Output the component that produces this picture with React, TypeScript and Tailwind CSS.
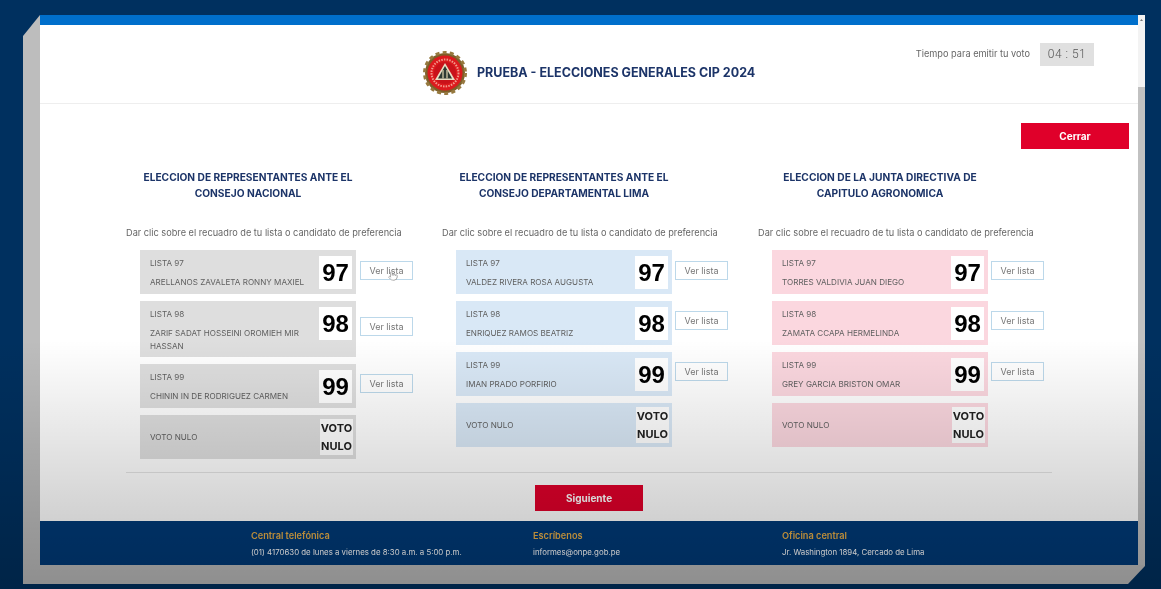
import { Pointer } from 'lucide-react';

const lists = [
  {
    title: 'ELECCION DE REPRESENTANTES ANTE EL',
    sub: 'CONSEJO NACIONAL',
    card: 'bg-[#dedede]',
    gap: 'ml-[4px]',
    rows: [
      { n: '97', name: 'ARELLANOS ZAVALETA RONNY MAXIEL', top: 'mt-[11px]', hover: true },
      { n: '98', name: 'ZARIF SADAT HOSSEINI OROMIEH MIR HASSAN', top: 'mt-[16px]' },
      { n: '99', name: 'CHININ IN DE RODRIGUEZ CARMEN', top: 'mt-[10px]' },
    ],
  },
  {
    title: 'ELECCION DE REPRESENTANTES ANTE EL',
    sub: 'CONSEJO DEPARTAMENTAL LIMA',
    card: 'bg-[#d9e8f6]',
    gap: 'ml-[3px]',
    rows: [
      { n: '97', name: 'VALDEZ RIVERA ROSA AUGUSTA', top: 'mt-[11px]' },
      { n: '98', name: 'ENRIQUEZ RAMOS BEATRIZ', top: 'mt-[10px]' },
      { n: '99', name: 'IMAN PRADO PORFIRIO', top: 'mt-[10px]' },
    ],
  },
  {
    title: 'ELECCION DE LA JUNTA DIRECTIVA DE',
    sub: 'CAPITULO AGRONOMICA',
    card: 'bg-[#fbd7df]',
    gap: 'ml-[3px]',
    rows: [
      { n: '97', name: 'TORRES VALDIVIA JUAN DIEGO', top: 'mt-[11px]' },
      { n: '98', name: 'ZAMATA CCAPA HERMELINDA', top: 'mt-[10px]' },
      { n: '99', name: 'GREY GARCIA BRISTON OMAR', top: 'mt-[10px]' },
    ],
  },
];

const footer = [
  { w: 'w-[282px]', label: 'Central telefónica', value: '(01) 4170630 de lunes a viernes de 8:30 a.m. a 5:00 p.m.' },
  { w: 'w-[249px]', label: 'Escríbenos', value: 'informes@onpe.gob.pe' },
  { w: 'w-[300px]', label: 'Oficina central', value: 'Jr. Washington 1894, Cercado de Lima' },
];

function Logo() {
  return (
    <svg width="44" height="44" viewBox="0 0 44 44" className="shrink-0">
      <circle cx="22" cy="22" r="20" fill="#7d5f2a" />
      <circle cx="22" cy="22" r="20.5" fill="none" stroke="#96793f" strokeWidth="3" strokeDasharray="4 3.2" />
      <circle cx="22" cy="22" r="17.5" fill="#dc1a1e" />
      <circle cx="22" cy="22" r="13.5" fill="none" stroke="#f29a8c" strokeWidth="2" strokeDasharray="1.5 1.2" />
      <circle cx="22" cy="22" r="11" fill="#c9121a" />
      <path d="M22 12 L32 29 L12 29 Z" fill="#e8dfc4" />
      <path d="M22 15 L29 27.5 L15 27.5 Z" fill="#2d3a33" />
      <path d="M20 19 L20 27.5 M24 19 L24 27.5" stroke="#c9c2a0" strokeWidth="1.4" />
    </svg>
  );
}

export default function App() {
  return (
    <div className="relative h-[589px] w-[1161px] overflow-hidden bg-[#00305f] pl-[23px] pt-[15px] font-['Inter','Liberation_Sans',sans-serif] blur-[0.4px]">
      {/* Marco gris */}
      <div className="h-[569px] w-[1122px] bg-[#bdbdbd] pl-[17px] [clip-path:polygon(17px_0,100%_0,100%_551px,1105px_100%,0_100%,0_21px)]">
        <div className="flex h-[550px] w-[1105px]">
          {/* Ventana */}
          <div className="flex w-[1098px] flex-col bg-white">
            <div className="h-[10px] shrink-0 bg-[#006fcb]" />

            {/* Header */}
            <header className="relative flex h-[79px] shrink-0 items-center border-b border-[#eeeeee] pl-[383px] pt-[18px]">
              <Logo />
              <h1 className="ml-[10px] text-[12.5px] font-bold text-[#1c3468]">PRUEBA - ELECCIONES GENERALES CIP 2024</h1>
              <div className="mb-[38px] ml-auto mr-[44px] flex items-center">
                <span className="text-[9.2px] text-[#666666]">Tiempo para emitir tu voto</span>
                <span className="ml-[10px] flex h-[23px] w-[54px] items-center justify-center bg-[#e0e0e0] font-['Roboto',sans-serif] text-[12px] font-light tracking-[0.5px] text-[#555555]">04 : 51</span>
              </div>
            </header>

            <div className="flex justify-end pr-[9px] pt-[19px]">
              <button className="h-[26px] w-[108px] bg-[#e0002a] text-[10px] font-bold text-white">Cerrar</button>
            </div>

            {/* Columnas */}
            <div className="mt-[20px] grid grid-cols-[316px_316px_316px] pl-[86px]">
              {lists.map((col) => (
                <section key={col.sub}>
                  <h2 className="w-[244px] text-center text-[10.2px] font-bold leading-[16px] text-[#1c3468]">
                    {col.title}
                    <br />
                    {col.sub}
                  </h2>
                  <p className="mt-[25px] whitespace-nowrap text-[9.2px] leading-[14px] text-[#666666]">Dar clic sobre el recuadro de tu lista o candidato de preferencia</p>

                  <div className="mt-[10px] flex flex-col gap-[7px] pl-[14px]">
                    {col.rows.map((row) => (
                      <div key={row.n} className="flex items-start">
                        <div className={`flex min-h-[44px] w-[216px] justify-between pb-[4px] pl-[10px] pr-[4px] pt-[6px] ${col.card}`}>
                          <div className="w-[160px] text-[8.1px] leading-[13px] text-[#5f5f5f]">
                            <div className="mt-[1px]">LISTA {row.n}</div>
                            <div className="mt-[6px]">{row.name}</div>
                          </div>
                          <div className="flex h-[33px] w-[33px] items-center justify-center bg-white font-['Liberation_Sans',sans-serif] text-[24px] font-bold text-black">{row.n}</div>
                        </div>
                        <button className={`relative h-[19px] w-[53px] border border-[#bcd8ea] bg-white text-[9px] text-[#777777] ${col.gap} ${row.top}`}>
                          Ver lista
                          {row.hover && <Pointer size={10} strokeWidth={1.5} className="absolute left-[27px] top-[9px] fill-white text-[#888888]" />}
                        </button>
                      </div>
                    ))}
                    <div className={`flex h-[44px] w-[216px] items-center justify-between pl-[10px] pr-[3px] ${col.card}`}>
                      <span className="text-[8.1px] text-[#5f5f5f]">VOTO NULO</span>
                      <span className="flex h-[36px] w-[33px] flex-col items-center justify-center bg-white text-center text-[11px] font-bold leading-[18px] text-[#222222]">VOTO<br />NULO</span>
                    </div>
                  </div>
                </section>
              ))}
            </div>

            <div className="ml-[86px] mt-[13px] h-px w-[926px] shrink-0 bg-[#e4e4e4]" />

            <div className="mt-[12px] flex justify-center">
              <button className="h-[26px] w-[108px] bg-[#e0002a] text-[10px] font-bold text-white">Siguiente</button>
            </div>

            {/* Footer */}
            <footer className="mt-[10px] flex h-[44px] shrink-0 items-center bg-[#003a78] pl-[211px] pt-[2px]">
              {footer.map((f) => (
                <div key={f.label} className={f.w}>
                  <div className="text-[9.2px] font-semibold leading-[16px] text-[#e6ae48]">{f.label}</div>
                  <div className="text-[7.85px] leading-[16px] text-white">{f.value}</div>
                </div>
              ))}
            </footer>
          </div>

          {/* Scrollbar */}
          <div className="flex w-[7px] flex-col bg-[#f3f3f3]">
            <div className="h-[72px] shrink-0 pt-[3px]">
              <svg width="7" height="4" viewBox="0 0 7 4">
                <path d="M3.5 1 L5 3 L2 3 Z" fill="#777777" />
              </svg>
            </div>
            <div className="flex-1 bg-[#c1c1c1]" />
          </div>
        </div>
      </div>

      {/* Degradado del video sobre la parte baja */}
      <div className="pointer-events-none absolute inset-x-0 bottom-0 h-[249px] bg-linear-to-b from-transparent to-black/25" />
    </div>
  );
}
